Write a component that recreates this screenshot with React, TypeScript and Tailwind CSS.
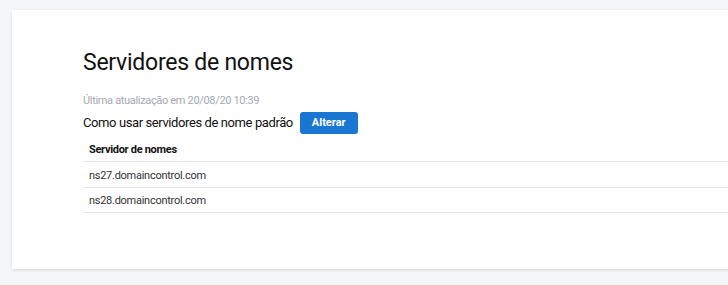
import React from 'react';

const servers = ['ns27.domaincontrol.com', 'ns28.domaincontrol.com'];

export default function App() {
  return (
    <div className="h-[285px] w-[728px] overflow-hidden bg-[#f5f6f8] pt-[10px] pl-[12px] font-['Roboto',sans-serif]">
      <div className="h-[259px] w-[740px] bg-white shadow-[0_1px_3px_rgba(0,0,0,0.12)] pl-[71px] pt-[37px]">
        <h1 className="text-[23px] leading-[32px] tracking-[-0.25px] text-[#111111]">Servidores de nomes</h1>

        <p className="mt-[14px] text-[11px] leading-[16px] tracking-[-0.33px] text-[#a6a9ad]">
          Última atualização em 20/08/20 10:39
        </p>

        <div className="mt-[3px] flex items-center gap-[7px]">
          <span className="text-[13px] tracking-[-0.4px] text-[#111111]">Como usar servidores de nome padrão</span>
          <button className="h-[22px] rounded-[3px] bg-[#1976d2] px-[12px] text-[11px] font-bold text-white">
            Alterar
          </button>
        </div>

        <div className="mt-[2px]">
          <div className="h-[26px] border-b border-[#e8e8e8] pl-[6px] pt-[6px] text-[11px] font-bold tracking-[-0.3px] text-[#111111]">
            Servidor de nomes
          </div>
          <div className="h-[26px] border-b border-[#e8e8e8] pl-[6px] pt-[6px] text-[11px] tracking-[-0.27px] text-[#333333]">
            {servers[0]}
          </div>
          <div className="h-[25px] border-b border-[#e8e8e8] pl-[6px] pt-[5px] text-[11px] tracking-[-0.27px] text-[#333333]">
            {servers[1]}
          </div>
        </div>
      </div>
    </div>
  );
}
